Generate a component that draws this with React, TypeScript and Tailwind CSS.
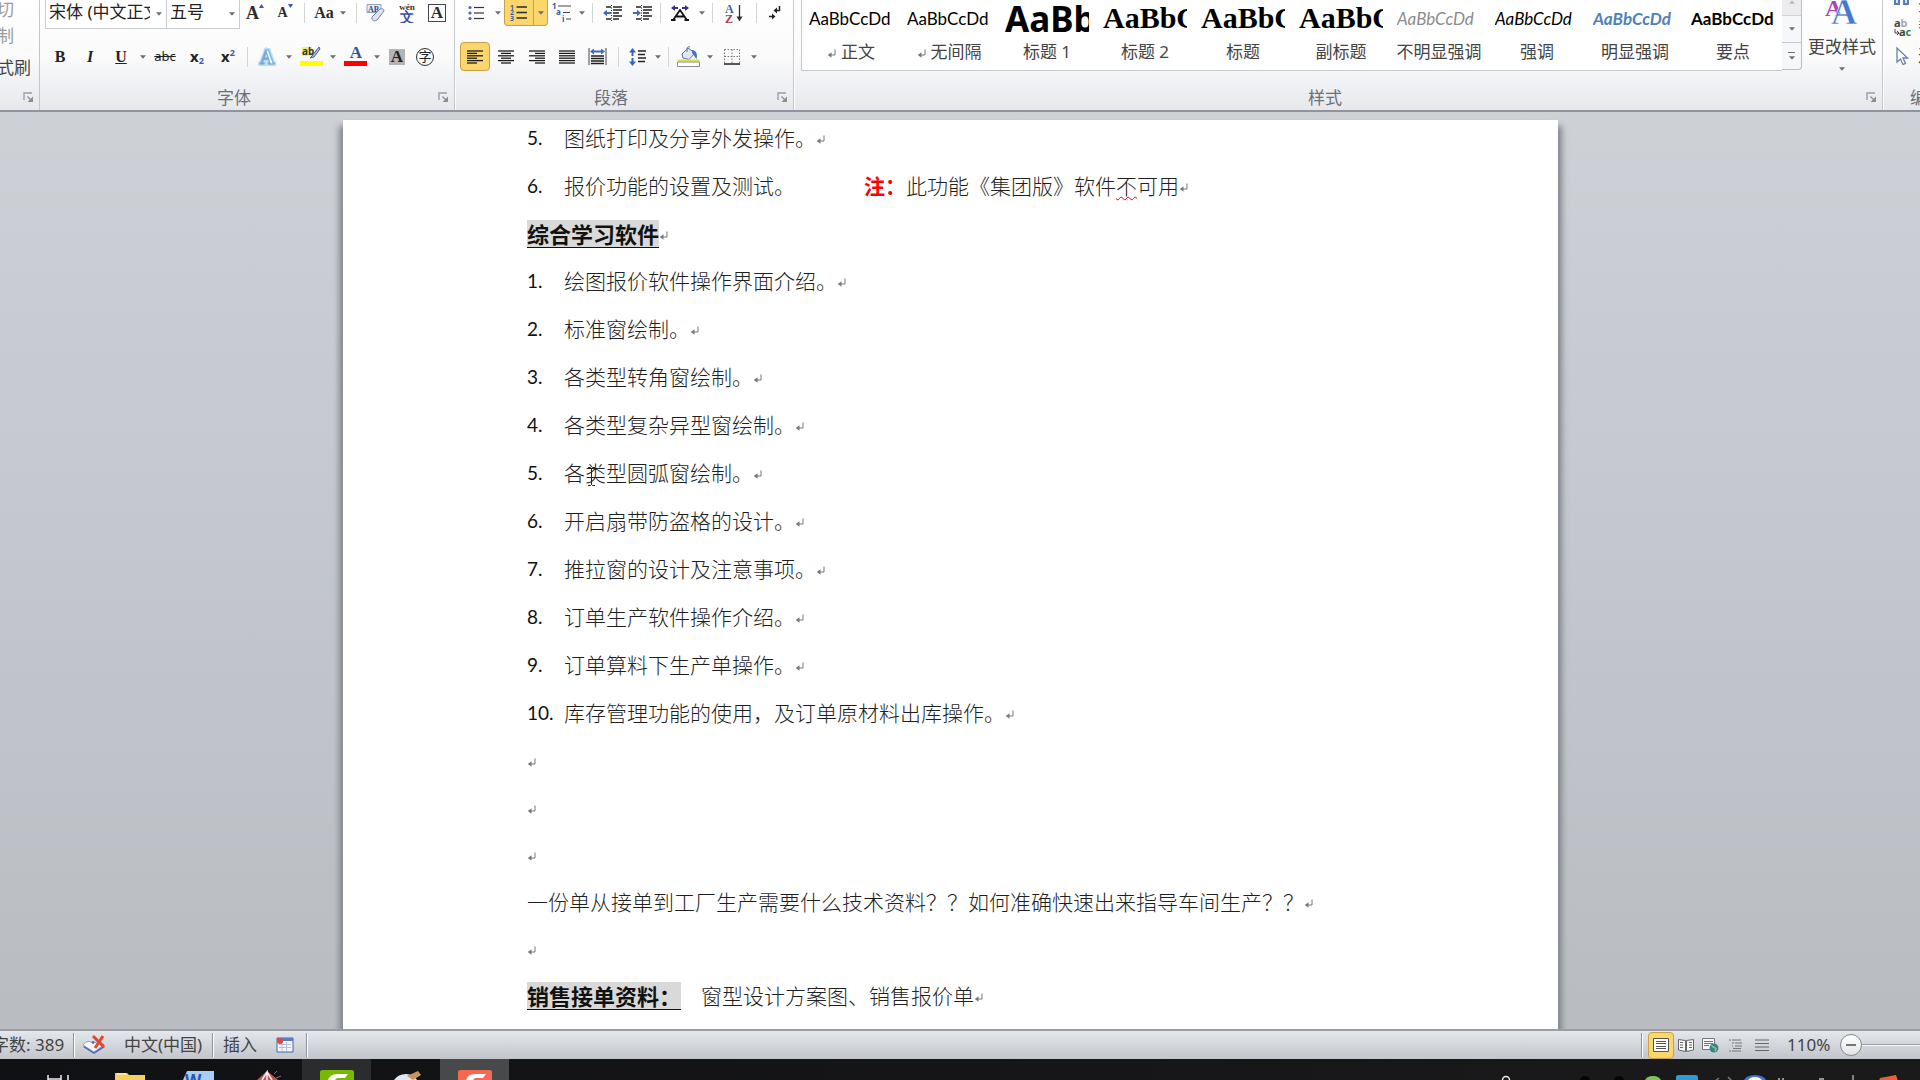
import type { ReactNode } from 'react'

const SANS = "font-['Noto_Sans','Noto_Sans_CJK_SC',sans-serif]"
const LATO = "font-['Lato','Noto_Sans_CJK_SC',sans-serif]"
const SERIF = "font-['Liberation_Serif',serif]"

const TOPICS = [
  '绘图报价软件操作界面介绍。',
  '标准窗绘制。',
  '各类型转角窗绘制。',
  '各类型复杂异型窗绘制。',
  '各类型圆弧窗绘制。',
  '开启扇带防盗格的设计。',
  '推拉窗的设计及注意事项。',
  '订单生产软件操作介绍。',
  '订单算料下生产单操作。',
  '库存管理功能的使用，及订单原材料出库操作。',
]

const STYLES = [
  { name: '正文', mark: true, sample: 'AaBbCcDd', look: "font-['Lato',sans-serif] text-[17px]" },
  { name: '无间隔', mark: true, sample: 'AaBbCcDd', look: "font-['Lato',sans-serif] text-[17px]" },
  { name: '标题 1', sample: 'AaBbC', look: "font-['Noto_Sans',sans-serif] text-[35px] font-bold" },
  { name: '标题 2', sample: 'AaBbC', look: "font-['Liberation_Serif',serif] text-[30px] font-bold" },
  { name: '标题', sample: 'AaBbC', look: "font-['Liberation_Serif',serif] text-[30px] font-bold" },
  { name: '副标题', sample: 'AaBbC', look: "font-['Liberation_Serif',serif] text-[30px] font-bold" },
  { name: '不明显强调', sample: 'AaBbCcDd', look: "font-['Lato',sans-serif] text-[17px] italic text-[#8c8c8c]" },
  { name: '强调', sample: 'AaBbCcDd', look: "font-['Lato',sans-serif] text-[17px] italic" },
  { name: '明显强调', sample: 'AaBbCcDd', look: "font-['Lato',sans-serif] text-[17px] font-bold italic text-[#4f81bd]" },
  { name: '要点', sample: 'AaBbCcDd', look: "font-['Lato',sans-serif] text-[17px] font-bold" },
]

/* ---------- small shared pieces ---------- */

function Caret({ className = 'text-[#6d6f73]' }: { className?: string }) {
  return (
    <svg width="6" height="4" viewBox="0 0 7 4" className={className}>
      <path d="M0 0h7L3.5 4z" fill="currentColor" />
    </svg>
  )
}

function Btn({ label, w = 'w-[30px]', className = '', children }: { label: string; w?: string; className?: string; children: ReactNode }) {
  return (
    <button aria-label={label} className={`flex h-full shrink-0 items-center justify-center ${w} ${className}`}>
      {children}
    </button>
  )
}

function Sep({ w = 'w-2' }: { w?: string }) {
  return (
    <span className={`flex h-5 shrink-0 justify-center self-center ${w}`}>
      <span className="w-px bg-[#d3d5d9]" />
    </span>
  )
}

function Launcher({ label }: { label: string }) {
  return (
    <button aria-label={label} className="shrink-0">
      <svg width="11" height="11" viewBox="0 0 11 11" fill="none">
        <path d="M1 8V1h8" stroke="#9b9ea4" strokeWidth="1.4" />
        <path d="M4.5 4.5l4 4" stroke="#8b8e94" strokeWidth="1.2" />
        <path d="M10 4.5V10H4.5z" fill="#8b8e94" />
      </svg>
    </button>
  )
}

function Group({ name, w, children }: { name: string; w: string; children: ReactNode }) {
  return (
    <section className={`flex flex-col border-r border-[#c3c6cb] shadow-[1px_0_0_#fff] ${w}`}>
      <div className="h-[85px]">{children}</div>
      <div className="flex items-center pr-[5px] text-[17px] leading-[25px] text-[#6a6f78]">
        <span className="flex-1 pr-2.5 text-center">{name}</span>
        <Launcher label={`${name}选项`} />
      </div>
    </section>
  )
}

function ReturnMark() {
  return (
    <svg width="10" height="10" viewBox="0 0 10 10" fill="none" className="mt-1 shrink-0">
      <path d="M8 .5V6H2" stroke="#777" strokeWidth="1" />
      <path d="M4.5 3.2v5.6L.8 6z" fill="#777" />
    </svg>
  )
}

/* ---------- icons ---------- */

type LinesKind = 'left' | 'center' | 'right' | 'full'

function Lines({ kind }: { kind: LinesKind }) {
  return (
    <svg width="16" height="14" viewBox="0 0 16 14" stroke="#1c1c1c" strokeWidth="1.3">
      {[1, 3.4, 5.8, 8.2, 10.6, 13].map((y, i) => {
        const len = kind === 'full' || i % 2 === 0 ? 16 : 10
        const x = kind === 'right' ? 16 - len : kind === 'center' ? (16 - len) / 2 : 0
        return <path key={y} d={`M${x} ${y}h${len}`} />
      })}
    </svg>
  )
}

function BulletsIcon() {
  return (
    <svg width="16" height="16" viewBox="0 0 16 16">
      {[2.5, 8, 13.5].map((y) => (
        <g key={y}>
          <circle cx="2" cy={y} r="1.6" fill="#4668b4" />
          <path d={`M6 ${y}h10`} stroke="#333" strokeWidth="1.2" />
        </g>
      ))}
    </svg>
  )
}

function NumbersIcon() {
  return (
    <svg width="18" height="17" viewBox="0 0 18 17">
      {[3, 8.5, 14].map((y, i) => (
        <g key={y}>
          <text x="0" y={y + 2.6} fontSize="7" fontWeight="700" fill="#40609c">{i + 1}</text>
          <path d={`M6.5 ${y}h10.5`} stroke="#333" strokeWidth="1.6" />
        </g>
      ))}
    </svg>
  )
}

function MultiLevelIcon() {
  return (
    <svg width="20" height="20" viewBox="0 0 20 20" fontSize="8" fontWeight="700">
      <text x="0" y="6" fill="#3a59a8">1</text>
      <text x="4" y="12" fill="#3a59a8">a</text>
      <text x="10" y="19" fill="#3a59a8">i</text>
      <path d="M6 3h13M11 9.5h7M14 16h5" stroke="#444" strokeWidth="1.2" />
    </svg>
  )
}

function IndentIcon({ out }: { out?: boolean }) {
  return (
    <svg width="19" height="17" viewBox="0 0 19 17">
      <path d="M3 2h5M10 2h9M10 5h9M10 8h6M10 11h9M3 14h5M10 14h6" stroke="#222" strokeWidth="1.6" />
      <path d="M8.5 0v17" stroke="#222" strokeDasharray="1 1.5" />
      <path d={out ? 'M0 8l4-3.2v2.2h4v2h-4v2.2z' : 'M8 8L4 4.8v2.2H0v2h4v2.2z'} fill="#3b6cc0" />
    </svg>
  )
}

function CharScaleIcon() {
  return (
    <svg width="18" height="16" viewBox="0 0 18 16">
      <path d="M0 3l4-3v2h3v2H4v2zM18 3l-4-3v2h-3v2h3v2z" fill="#3a2f8f" />
      <path d="M2.5 14.5L9 5l6.5 9.5M5 11.5h8M0 15h4.5M13.5 15H18" fill="none" stroke="#111" strokeWidth="1.8" />
    </svg>
  )
}

function SortIcon() {
  return (
    <svg width="19" height="19" viewBox="0 0 19 19" className="font-['Liberation_Serif',serif]" fontSize="12" fontWeight="700">
      <text x="0" y="9" fill="#3d62ae">A</text>
      <text x="0" y="18.5" fill="#b23a48">Z</text>
      <path d="M14.5 1v14" stroke="#333" strokeWidth="1.3" />
      <path d="M11.5 12.5h6l-3 5z" fill="#333" />
    </svg>
  )
}

function MarksIcon() {
  return (
    <svg width="13" height="15" viewBox="0 0 13 15" fill="none">
      <path d="M11.5 0v4.5H8M1 10.5h4" stroke="#222" strokeWidth="1.5" />
      <path d="M9 1.5v6L5.5 4.5zM4 7.5v6l3.5-3z" fill="#222" />
    </svg>
  )
}

function DistributeIcon() {
  return (
    <svg width="19" height="18" viewBox="0 0 19 18">
      <path d="M1 0v17M18 0v17" stroke="#6b7076" strokeWidth="1.3" />
      <path d="M2 3.5L6 .5v2h7v-2l4 3-4 3v-2H6v2z" fill="#3b6cc0" />
      <path d="M3 8h13M3 10.5h13M3 13h13M3 15.5h13" stroke="#222" strokeWidth="1.4" />
    </svg>
  )
}

function SpacingIcon() {
  return (
    <svg width="18" height="18" viewBox="0 0 18 18">
      <path d="M3.5 0L7 4.5H4.5V8h-2V4.5H0zM3.5 18L7 13.5H4.5V10h-2v3.5H0z" fill="#3565b5" />
      <path d="M9 3h8M9 6.5h7M9 10h8M9 13.5h7" stroke="#222" strokeWidth="1.3" />
    </svg>
  )
}

function BucketIcon() {
  return (
    <svg width="23" height="21" viewBox="0 0 23 21">
      <path d="M5 8l6-6 7 5-6 6.5-6-1.5z" fill="#dfe7f3" stroke="#56729f" />
      <path d="M10 6V2.5a2 2 0 013-1.5" fill="none" stroke="#56729f" />
      <path d="M15 4c4 0 6 4 4.500 9-1.500-1-2-4-4.500-6z" fill="#4775bb" />
      <path d="M.5 14.5h22" stroke="#d9e04a" strokeWidth="2" />
      <path d="M.5 16h22v4.5H.5z" fill="#fff" stroke="#8a8a8a" />
    </svg>
  )
}

function BordersIcon() {
  return (
    <svg width="16" height="16" viewBox="0 0 16 16" fill="none">
      <path d="M.5 .5h15M.5 .5v14M15.5 .5v14M8 .5v14M.5 7.5h15" stroke="#777" strokeDasharray="1.5 1.5" />
      <path d="M0 15h16" stroke="#222" strokeWidth="1.5" />
    </svg>
  )
}

function EraserIcon() {
  return (
    <svg width="20" height="19" viewBox="0 0 20 19">
      <path d="M1 .5h14v8H1z" fill="#e9edf5" stroke="#8ea0c0" />
      <text x="2" y="8" fontSize="8" fontWeight="700" fill="#3b4a78">AB</text>
      <path d="M6 13l8-8c2-1 4 0 4 2l-7 9c-3 2-6 0-5-3z" fill="#dfe4ef" stroke="#7285ad" />
    </svg>
  )
}

function PhoneticIcon() {
  return (
    <svg width="20" height="20" viewBox="0 0 20 20" textAnchor="middle">
      <text x="10" y="7" fontSize="9" fontWeight="700" fill="#333">wén</text>
      <text x="10" y="19" fontSize="14" fontWeight="700" fill="#3f51b0">文</text>
    </svg>
  )
}

function HighlightIcon() {
  return (
    <svg width="23" height="21" viewBox="0 0 23 21">
      <path d="M2 1h10v9H2z" fill="#eef26a" />
      <text x="2" y="9" fontSize="10" fontWeight="700" fill="#333">ab</text>
      <path d="M19 1l-7 9-2 2 4-1 6-8z" fill="#a9bfe2" stroke="#4a5f8c" />
      <path d="M0 15h23v5H0z" fill="#ffff00" />
    </svg>
  )
}

function FontColorIcon() {
  return (
    <svg width="23" height="21" viewBox="0 0 23 21" className="font-['Liberation_Serif',serif]">
      <text x="12" y="12" fontSize="17" fontWeight="700" fill="#33549b" textAnchor="middle">A</text>
      <path d="M0 15h23v5H0z" fill="#ff0000" />
    </svg>
  )
}

function GlowIcon() {
  return (
    <svg width="20" height="20" viewBox="0 0 20 20" className="font-['Liberation_Serif',serif]" fontSize="20" fontWeight="700" textAnchor="middle">
      <text x="10" y="17" fill="none" stroke="#bfe0f4" strokeWidth="4">A</text>
      <text x="10" y="17" fill="#fff" stroke="#6aaedb" strokeWidth="1.2">A</text>
    </svg>
  )
}

function ChangeStylesIcon() {
  return (
    <svg width="34" height="26" viewBox="0 0 34 26" className="font-['Liberation_Serif',serif]" fontWeight="700">
      <text x="0" y="16" fontSize="24" fill="#a846b0">A</text>
      <text x="6" y="24" fontSize="36" fill="#4478cc" stroke="#fff" strokeWidth=".5">A</text>
    </svg>
  )
}

/* ---------- ribbon ---------- */

function Combo({ label, value, w }: { label: string; value: string; w: string }) {
  return (
    <div className={`relative h-[29px] border-r border-b border-[#c9ccd1] bg-white ${w}`}>
      <select aria-label={label} className="h-6 w-full appearance-none truncate pr-4 pl-[3px] text-[17px] leading-6 text-clip text-[#222] outline-none">
        <option>{value}</option>
      </select>
      <span className="pointer-events-none absolute top-3 right-1">
        <Caret />
      </span>
    </div>
  )
}

function FontGroup() {
  return (
    <Group name="字体" w="w-[415px]">
      <div className="flex h-[29px] pl-[5px]">
        <Combo label="字体" value="宋体 (中文正文)" w="w-[122px] border-l" />
        <Combo label="字号" value="五号" w="w-[73px]" />
        <div className={`flex h-[26px] text-[#2b2b2b] ${SERIF}`}>
          <Btn label="增大字体">
            <span className="text-[18px] font-bold">A</span>
            <svg width="5" height="4" viewBox="0 0 5 4" className="mt-1 self-start"><path d="M0 4h5L2.5 0z" fill="#3f51b0" /></svg>
          </Btn>
          <Btn label="缩小字体">
            <span className="text-sm font-bold">A</span>
            <svg width="5" height="4" viewBox="0 0 5 4" className="mt-1 self-start"><path d="M0 0h5L2.5 4z" fill="#3f51b0" /></svg>
          </Btn>
          <Sep />
          <Btn label="更改大小写" w="w-11" className="gap-1.5">
            <span className="text-base font-bold">Aa</span>
            <Caret />
          </Btn>
          <Sep />
          <Btn label="清除格式" w="w-8"><EraserIcon /></Btn>
          <Btn label="拼音指南"><PhoneticIcon /></Btn>
          <Btn label="字符边框">
            <span className="w-[18px] border border-[#445] text-center text-[17px] leading-4 font-bold">A</span>
          </Btn>
        </div>
      </div>
      <div className="mt-[13px] flex h-[29px] pl-[5px] text-[#222]">
        <Btn label="加粗"><span className={`text-base font-bold ${SERIF}`}>B</span></Btn>
        <Btn label="倾斜"><span className={`text-base font-bold italic ${SERIF}`}>I</span></Btn>
        <Btn label="下划线" w="w-8"><span className={`text-base font-bold underline ${SERIF}`}>U</span></Btn>
        <Btn label="下划线样式" w="w-3"><Caret /></Btn>
        <Btn label="删除线" w="w-8"><span className={`text-[13px] line-through ${SANS}`}>abc</span></Btn>
        <Btn label="下标" w="w-8">
          <span className="text-[15px] font-bold">x</span>
          <span className="self-end pb-1 text-[9px] font-bold text-[#3b5cb0]">2</span>
        </Btn>
        <Btn label="上标">
          <span className="text-[15px] font-bold">x</span>
          <span className="self-start pt-1 text-[9px] font-bold text-[#3b5cb0]">2</span>
        </Btn>
        <Sep />
        <Btn label="文本效果" w="w-8"><GlowIcon /></Btn>
        <Btn label="文本效果选项" w="w-3"><Caret /></Btn>
        <Btn label="突出显示" w="w-8"><HighlightIcon /></Btn>
        <Btn label="突出显示颜色" w="w-3"><Caret /></Btn>
        <Btn label="字体颜色" w="w-8"><FontColorIcon /></Btn>
        <Btn label="字体颜色选项" w="w-3"><Caret /></Btn>
        <Btn label="字符底纹" w="w-7">
          <span className={`w-4 bg-[#b4b4b4] text-center text-[17px] leading-4 font-bold ${SERIF}`}>A</span>
        </Btn>
        <Btn label="带圈字符" w="w-7">
          <span className="flex size-[18px] items-center justify-center rounded-full border border-[#333] text-[13px] leading-none">字</span>
        </Btn>
      </div>
    </Group>
  )
}

function ParagraphGroup() {
  return (
    <Group name="段落" w="w-[339px]">
      <div className="flex h-[29px] pl-[5px]">
        <div className="flex h-[26px]">
          <Btn label="项目符号" w="w-8"><BulletsIcon /></Btn>
          <Btn label="项目符号选项" w="w-3"><Caret /></Btn>
          <Btn label="编号" className="rounded-bl border border-t-0 border-[#c8a04a] bg-[#fbd76b]"><NumbersIcon /></Btn>
          <Btn label="编号选项" w="w-[14px]" className="rounded-br border border-t-0 border-l-0 border-[#c8a04a] bg-[#fbd76b]"><Caret /></Btn>
          <Btn label="多级列表" w="w-7"><MultiLevelIcon /></Btn>
          <Btn label="多级列表选项" w="w-3"><Caret /></Btn>
          <Sep />
          <Btn label="减少缩进量" w="w-8"><IndentIcon out /></Btn>
          <Btn label="增加缩进量" w="w-7"><IndentIcon /></Btn>
          <Sep />
          <Btn label="中文版式" w="w-8"><CharScaleIcon /></Btn>
          <Btn label="中文版式选项" w="w-3"><Caret /></Btn>
          <Sep />
          <Btn label="排序" w="w-9"><SortIcon /></Btn>
          <Sep />
          <Btn label="显示编辑标记" w="w-7"><MarksIcon /></Btn>
        </div>
      </div>
      <div className="mt-[13px] flex h-[29px] pl-[5px]">
        <Btn label="左对齐" className="rounded border border-[#c8a04a] bg-[#fbd76b]"><Lines kind="left" /></Btn>
        <Btn label="居中" w="w-8"><Lines kind="center" /></Btn>
        <Btn label="右对齐"><Lines kind="right" /></Btn>
        <Btn label="两端对齐"><Lines kind="full" /></Btn>
        <Btn label="分散对齐"><DistributeIcon /></Btn>
        <Sep w="w-3" />
        <Btn label="行距" w="w-7"><SpacingIcon /></Btn>
        <Btn label="行距选项" w="w-3"><Caret /></Btn>
        <Sep />
        <Btn label="底纹" w="w-8"><BucketIcon /></Btn>
        <Btn label="底纹选项" w="w-3"><Caret /></Btn>
        <Btn label="边框" w="w-8"><BordersIcon /></Btn>
        <Btn label="边框选项" w="w-3"><Caret /></Btn>
      </div>
    </Group>
  )
}

function StylesGroup() {
  return (
    <Group name="样式" w="w-[1089px] shrink-0">
      <div className="flex pl-[7px]">
        <div className="flex h-[71px] border-b border-l border-[#c3c6cb] bg-white">
          {STYLES.map((s) => (
            <button key={s.name} className="flex w-[98px] flex-col items-center">
              <span className={`flex h-9 w-[84px] items-center overflow-hidden leading-none whitespace-nowrap ${s.look}`}>
                {s.sample}
              </span>
              <span className="flex h-8 items-center gap-1 text-[17px] text-[#444]">
                {s.mark && <ReturnMark />}
                {s.name}
              </span>
            </button>
          ))}
        </div>
        <div className="flex h-[70px] w-5 flex-col rounded-br border-r border-b border-[#b9bcc2] bg-[#f6f7f8]">
          <button aria-label="上一行" className="flex h-4 items-start justify-center border-b border-[#d0d2d6] bg-[#ececee]">
            <Caret className="rotate-180 text-[#b9bbbf]" />
          </button>
          <button aria-label="下一行" className="flex flex-1 items-center justify-center border-b border-[#c3c6cb]">
            <Caret />
          </button>
          <button aria-label="其他" className="flex flex-1 flex-col items-center justify-center gap-[3px]">
            <span className="h-px w-[7px] bg-[#6d6f73]" />
            <Caret />
          </button>
        </div>
        <button className="flex flex-1 flex-col items-center text-[17px] leading-6 text-[#444]">
          <span className="flex h-[35px]">
            <ChangeStylesIcon />
          </span>
          更改样式
          <span className="pt-2">
            <Caret />
          </span>
        </button>
      </div>
    </Group>
  )
}

function EditGroup() {
  return (
    <section className="min-w-0 flex-1 overflow-hidden pl-2.5 text-[17px] whitespace-nowrap text-[#444]">
      <div className="flex h-[85px] flex-col">
        <button className="flex h-[14px] items-start gap-1.5 leading-[10px]">
          <svg width="19" height="8" viewBox="0 0 19 8" className="shrink-0">
            <path d="M1 0h6v5H1zM10 0h6v5h-6z" fill="#5a79bd" />
            <path d="M3 0h2v3H3zM12 0h2v3h-2z" fill="#dbe4f5" />
          </svg>
          查找
        </button>
        <button className="flex h-[28px] items-center gap-1.5 leading-6">
          <svg width="19" height="20" viewBox="0 0 19 20" fontSize="11" fontWeight="700" className="shrink-0">
            <text x="1" y="9" fill="#444">a<tspan fill="#aaa">b</tspan></text>
            <text x="6" y="18" fill="#444">a<tspan fill="#2c8a2c">c</tspan></text>
            <path d="M2 11v4h3M4 13l2 2-2 2" fill="none" stroke="#444" />
          </svg>
          替换
        </button>
        <button className="flex h-[28px] items-center gap-1.5 leading-6">
          <svg width="19" height="20" viewBox="0 0 19 20" className="shrink-0">
            <path d="M4 2v14l3.5-3 2.5 5.5 2.5-1L10 12h4.5z" fill="#fff" stroke="#6680a8" strokeWidth="1.3" />
          </svg>
          选择
        </button>
      </div>
      <div className="pl-[17px] leading-[25px] text-[#6a6f78]">编辑</div>
    </section>
  )
}

function Ribbon() {
  return (
    <header className="flex h-[112px] shrink-0 overflow-hidden border-b-2 border-[#8f939d] bg-linear-to-b from-white via-[#fbfbfc] to-[#e6e8ec]">
      <section className="flex w-10 shrink-0 flex-col overflow-hidden border-r border-[#c3c6cb] text-[17px]">
        <div className="flex h-[85px] w-[31px] flex-col items-end self-start text-[#9b9b9b]">
          <button className="mr-[17px] flex h-5 items-center leading-[10px] whitespace-nowrap">剪切</button>
          <button className="mr-[17px] h-8 leading-8 whitespace-nowrap">复制</button>
          <button className="h-8 leading-8 whitespace-nowrap text-[#444]">格式刷</button>
        </div>
        <div className="flex h-[25px] items-center justify-end px-[5px]">
          <Launcher label="剪贴板选项" />
        </div>
      </section>
      <FontGroup />
      <ParagraphGroup />
      <StylesGroup />
      <EditGroup />
    </header>
  )
}

/* ---------- document ---------- */

function NumberedLine({ n, children }: { n: number; children: ReactNode }) {
  return (
    <li className="flex h-12 items-center">
      <span className={`w-[37px] shrink-0 text-[19px] font-normal text-[#111] ${LATO}`}>{n}.</span>
      {children}
      <ReturnMark />
    </li>
  )
}

function Line({ children }: { children?: ReactNode }) {
  return (
    <div className="flex h-[47px] items-center">
      {children}
      <ReturnMark />
    </div>
  )
}

function Heading({ children }: { children: ReactNode }) {
  return (
    <h2 className="bg-[#d9d9d9] text-[22px] leading-7 font-bold text-[#111] underline decoration-1 underline-offset-4">{children}</h2>
  )
}

function IBeam() {
  return (
    <svg width="9" height="19" viewBox="0 0 9 19" fill="none" stroke="#222" className="absolute top-2 left-[23px]">
      <path d="M1 .5h2.5l1 1 1-1H8M4.5 1.5v16M1 18.5h2.5l1-1 1 1H8" />
    </svg>
  )
}

function Document() {
  return (
    <main className="min-h-0 flex-1 overflow-hidden bg-linear-to-b from-[#cdd0d5] via-[#c5c8d0] via-40% to-[#b9bdc1] pt-2 pr-[19px]">
      <article className="mx-auto h-full w-[1215px] overflow-hidden bg-white px-[184px] text-[21px] leading-7 font-light whitespace-pre text-[#1f1f1f] shadow-[-4px_6px_6px_#85888f,4px_6px_6px_#85888f]">
        <div className="-mt-1.5">
          <ol>
            <NumberedLine n={5}>图纸打印及分享外发操作。</NumberedLine>
            <NumberedLine n={6}>
              <span className="mr-[69px]">报价功能的设置及测试。</span>
              <strong className="font-bold text-[#f00]">注：</strong>
              此功能《集团版》软件
              <span className="underline decoration-[#f00] decoration-wavy decoration-1 underline-offset-2">不</span>
              可用
            </NumberedLine>
          </ol>
          <Line>
            <Heading>综合学习软件</Heading>
          </Line>
          <ol>
            {TOPICS.map((topic, i) => (
              <NumberedLine key={topic} n={i + 1}>
                <span className="relative">
                  {topic}
                  {i === 4 && <IBeam />}
                </span>
              </NumberedLine>
            ))}
          </ol>
          <Line />
          <Line />
          <Line />
          <Line>一份单从接单到工厂生产需要什么技术资料？？如何准确快速出来指导车间生产？？</Line>
          <Line />
          <Line>
            <Heading>销售接单资料：</Heading>
            <span className="ml-5">窗型设计方案图、销售报价单</span>
          </Line>
        </div>
      </article>
    </main>
  )
}

/* ---------- status bar and taskbar ---------- */

function StatusSep() {
  return <span className="h-6 w-px shrink-0 bg-[#8f939a] shadow-[1px_0_0_#fff]" />
}

function StatusBar() {
  return (
    <footer className="flex h-[30px] shrink-0 items-center overflow-hidden border-t-2 border-[#9a9da3] bg-linear-to-b from-[#e4e7eb] to-[#c2c5cb] text-[17px] whitespace-nowrap text-[#444]">
      <button className="-ml-2 w-[81px] text-left">字数: 389</button>
      <StatusSep />
      <button aria-label="校对" className="ml-2 w-[26px]">
        <svg width="25" height="22" viewBox="0 0 25 22">
          <path d="M1 13l10-6 12 6-11 7z" fill="#4d6cb5" />
          <path d="M1 11c3-4 7-5 10-1 3-3 8-3 11 1l-10 7z" fill="#f5f7fb" stroke="#7e90b8" strokeWidth=".8" />
          <path d="M11 2l11 11M21 2L13 14" stroke="#e8452f" strokeWidth="3" />
        </svg>
      </button>
      <button className="mx-[11px] w-[82px] pl-[5px] text-left">中文(中国)</button>
      <StatusSep />
      <button className="w-[63px] pl-[10px] text-left">插入</button>
      <button aria-label="宏录制" className="mr-3">
        <svg width="18" height="16" viewBox="0 0 18 16">
          <path d="M1 1h16v14H1z" fill="#f2f5fb" stroke="#4565ae" />
          <path d="M1 1h16v3H1z" fill="#5c7cc4" />
          <path d="M3 7.5h12M3 10.5h12M6 5v9M10.5 5v9" stroke="#b3c0dd" />
          <circle cx="4" cy="4" r="3" fill="#dd4b39" />
        </svg>
      </button>
      <StatusSep />
      <div className="ml-auto flex h-full items-center">
        <StatusSep />
        <button aria-label="页面视图" className="ml-1.5 flex h-[27px] w-[26px] items-center justify-center rounded border border-[#c8a04a] bg-[#fbd76b]">
          <svg width="16" height="14" viewBox="0 0 16 14" stroke="#555">
            <path d="M.5 .5h15v13H.5z" fill="#fff" />
            <path d="M3 3.5h10M3 5.5h10M3 8.5h10M3 10.5h10" />
          </svg>
        </button>
        <button aria-label="阅读版式" className="ml-1">
          <svg width="16" height="15" viewBox="0 0 16 15" fill="#f6f6f6" stroke="#666">
            <path d="M.5 1.5l7 1v11l-7-1.5zM15.5 1.5l-7 1v11l7-1.5z" />
            <path d="M2 4.5h3M2 7h3M2 9.5h3M11 4.5h3M11 7h3M11 9.5h3" />
          </svg>
        </button>
        <button aria-label="Web 版式" className="ml-2">
          <svg width="17" height="15" viewBox="0 0 17 15">
            <path d="M.5 .5h12v11H.5z" fill="#f6f6f6" stroke="#777" />
            <path d="M2 3.5h9M2 5.5h9M2 7.5h5" stroke="#777" />
            <circle cx="12" cy="10" r="4.5" fill="#3c7f92" />
            <path d="M9.5 8c2 0 2 2 3.5 2s1 2 0 3.5" fill="none" stroke="#7fd07a" strokeWidth="1.5" />
          </svg>
        </button>
        <button aria-label="大纲视图" className="ml-2.5">
          <svg width="14" height="13" viewBox="0 0 14 13" stroke="#777" strokeWidth="1.2">
            <path d="M0 1h2M3 1h9M3 4h2M6 4h7M3 7h1M6 7h7M0 12h2M3 12h9M4 9.5h8" />
          </svg>
        </button>
        <button aria-label="草稿" className="ml-3">
          <svg width="14" height="13" viewBox="0 0 14 13" stroke="#666" strokeWidth="1.2">
            <path d="M0 1h14M0 4.5h14M0 8h14M0 11.5h14" />
          </svg>
        </button>
        <button className="ml-[18px] w-[53px] text-left">110%</button>
        <button aria-label="缩小" className="flex size-[22px] items-center justify-center rounded-full border border-[#85888f] bg-linear-to-b from-white to-[#e2e4e8]">
          <span className="h-0.5 w-2.5 bg-[#777]" />
        </button>
        <span className="h-0.5 w-[58px] border-t border-[#9a9da3] bg-white" />
      </div>
    </footer>
  )
}

function Task({ label, className = '', children }: { label: string; className?: string; children: ReactNode }) {
  return (
    <button aria-label={label} className={`flex h-full w-[69px] items-end justify-center ${className}`}>
      <svg width="36" height="10" viewBox="0 0 36 10">
        {children}
      </svg>
    </button>
  )
}

function Tray({ label, children }: { label: string; children: ReactNode }) {
  return (
    <button aria-label={label} className="flex w-[34px] justify-center">
      <svg width="24" height="5" viewBox="0 0 24 5">
        {children}
      </svg>
    </button>
  )
}

function Taskbar() {
  return (
    <nav className="flex h-[21px] shrink-0 items-end overflow-hidden bg-linear-to-r from-[#101114] to-[#1b1a1b]">
      <div className="flex h-full pl-[26px]">
        <Task label="任务视图">
          <path d="M5 5v5M5 9h13M18 5v5M25 5v5" stroke="#eee" strokeWidth="1.5" />
        </Task>
        <Task label="文件资源管理器">
          <path d="M3 10V3h12l2 2h16v5z" fill="#f4cf62" />
          <path d="M5 4h9" stroke="#fdeeb0" strokeWidth="1.5" />
        </Task>
        <Task label="Word">
          <path d="M2 10L6 1h27v9z" fill="#a9cdf5" />
          <text x="4" y="17" fontSize="17" fontWeight="700" fill="#2458a8">W</text>
        </Task>
        <Task label="绘图软件">
          <path d="M7 10l10-9 11 9z" fill="#c9534a" />
          <path d="M12 10l5-8v8M17 2l5 8" fill="none" stroke="#eee" strokeWidth="1.5" />
          <path d="M24 4l3-3M26 8l5-2" stroke="#777" />
        </Task>
        <Task label="录屏编辑" className="bg-[#2b2c2e]">
          <path d="M1 10V2q0-2 3-2h28q3 0 3 2v8z" fill="#76b900" />
          <path d="M9 10q2-6 9-6h11l-3 4H18l-2 2z" fill="#fff" />
        </Task>
        <Task label="画图">
          <path d="M6 10q4-6 12-6 8 0 11 6z" fill="#dfe8f0" />
          <path d="M19 6L30 1l3 4-8 5z" fill="#c9955a" />
        </Task>
        <Task label="录屏" className="bg-[#48494b]">
          <path d="M1 10V2q0-2 3-2h28q3 0 3 2v8z" fill="#f4694f" />
          <path d="M9 10q2-6 9-6h11l-3 4H18l-2 2z" fill="#fff" />
        </Task>
      </div>
      <div className="ml-auto flex pr-3">
        <span className="mr-[45px]">
          <Tray label="人脉">
            <circle cx="12" cy="5" r="3.5" fill="none" stroke="#eee" strokeWidth="1.5" />
          </Tray>
        </span>
        <Tray label="隐藏的图标"><circle cx="12" cy="6" r="5" fill="#050505" /></Tray>
        <Tray label="音频"><circle cx="12" cy="6" r="5" fill="#050505" /></Tray>
        <Tray label="微信"><ellipse cx="12" cy="6" rx="8" ry="5" fill="#7cc651" /></Tray>
        <Tray label="安全中心"><path d="M1 6V2q0-2 3-2h16q3 0 3 2v4z" fill="#2f9ad6" /></Tray>
        <Tray label="声音"><path d="M6 6l4-3M19 2l4 4" stroke="#777" strokeWidth="1.5" /></Tray>
        <Tray label="云盘"><ellipse cx="12" cy="6" rx="11" ry="6" fill="#3f73d8" /><ellipse cx="12" cy="6" rx="7" ry="4" fill="#fff" /></Tray>
        <Tray label="网络"><path d="M1 4h2M5 4h2" stroke="#bbb" strokeWidth="1.5" /></Tray>
        <Tray label="时间"><path d="M8 4h5" stroke="#bbb" strokeWidth="1.5" /></Tray>
        <Tray label="输入法"><path d="M8 0v6" stroke="#ccc" strokeWidth="1.2" /></Tray>
        <Tray label="通知"><path d="M0 6l1-3L17 0l2 6z" fill="#e8603a" /></Tray>
      </div>
    </nav>
  )
}

export default function App() {
  return (
    <div className={`flex h-screen flex-col overflow-hidden ${SANS}`}>
      <Ribbon />
      <Document />
      <StatusBar />
      <Taskbar />
    </div>
  )
}
